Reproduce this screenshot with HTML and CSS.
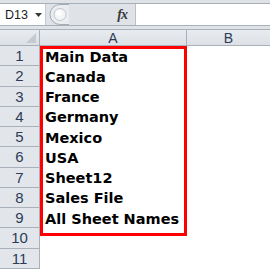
FILE: index.html
```html
<!DOCTYPE html>
<html>
<head>
<meta charset="utf-8">
<link rel="stylesheet" href="styles.css">
</head>
<body>
<div class="app">
  <div class="fbar">
    <div class="fbar-row">
      <div class="namebox">
        <span class="nb-text">D13</span>
        <svg class="nb-arrow" width="7" height="4" viewBox="0 0 7 4"><path d="M0 0H7L3.5 4Z" fill="#3a3a3a"/></svg>
      </div>
      <div class="fx-area">
        <svg class="pill" width="20" height="21" viewBox="0 0 20 21">
          <path d="M20 0.5H11A10 10 0 0 0 11 20.5H20" fill="#e9ecf0" stroke="#a3abb4"/>
          <circle cx="11" cy="10.5" r="6" fill="#f4f5f7" stroke="#c3c8ce"/>
          <circle cx="10" cy="9" r="3" fill="#ffffff" opacity="0.8"/>
        </svg>
        <span class="fx">fx</span>
      </div>
      <div class="finput"></div>
    </div>
  </div>
  <div class="sheet">
    <div class="hrow">
      <div class="corner"><svg width="10" height="10" viewBox="0 0 10 10"><path d="M10 0V10H0Z" fill="#c5cad1"/></svg></div>
      <div class="ch ca">A</div>
      <div class="ch cb">B</div>
    </div>
    <div class="row"><div class="rh">1</div><div class="cell ca">Main Data</div><div class="cell cb"></div></div>
    <div class="row"><div class="rh">2</div><div class="cell ca">Canada</div><div class="cell cb"></div></div>
    <div class="row"><div class="rh">3</div><div class="cell ca">France</div><div class="cell cb"></div></div>
    <div class="row"><div class="rh">4</div><div class="cell ca">Germany</div><div class="cell cb"></div></div>
    <div class="row"><div class="rh">5</div><div class="cell ca">Mexico</div><div class="cell cb"></div></div>
    <div class="row"><div class="rh">6</div><div class="cell ca">USA</div><div class="cell cb"></div></div>
    <div class="row"><div class="rh">7</div><div class="cell ca">Sheet12</div><div class="cell cb"></div></div>
    <div class="row"><div class="rh">8</div><div class="cell ca">Sales File</div><div class="cell cb"></div></div>
    <div class="row"><div class="rh">9</div><div class="cell ca">All Sheet Names</div><div class="cell cb"></div></div>
    <div class="row"><div class="rh">10</div><div class="cell ca"></div><div class="cell cb"></div></div>
    <div class="row"><div class="rh">11</div><div class="cell ca"></div><div class="cell cb"></div></div>
    <div class="hl-box"></div>
  </div>
</div>
</body>
</html>
```

FILE: styles.css
```css
html, body {
  margin: 0;
  padding: 0;
  background: #ffffff;
}
.app {
  width: 270px;
  height: 269px;
  overflow: hidden;
  display: flex;
  flex-direction: column;
}
.fbar {
  background: #dfe3e8;
  padding: 3px 0 3px 0;
  border-top: 0;
}
.fbar-row {
  display: flex;
  height: 21px;
  border-top: 1px solid #a7afb8;
  border-bottom: 1px solid #a7afb8;
}
.namebox {
  width: 46px;
  background: #ffffff;
  display: flex;
  align-items: center;
  justify-content: space-between;
  padding: 0 3px 0 5px;
  box-sizing: border-box;
  border-right: 1px solid #c6ccd3;
}
.nb-text {
  font-family: "Liberation Sans", Arial, sans-serif;
  font-size: 12.5px;
  color: #1e1e1e;
}
.nb-arrow {
  display: block;
}
.fx-area {
  width: 89px;
  display: flex;
  align-items: center;
  background: #dfe3e8;
  padding-left: 3px;
  box-sizing: border-box;
}
.pill {
  display: block;
  margin-top: -1px;
}
.fx {
  margin-left: auto;
  margin-right: 8px;
  font-family: "Liberation Serif", "Times New Roman", serif;
  font-style: italic;
  font-weight: bold;
  font-size: 14px;
  color: #3a3a3a;
  letter-spacing: -1px;
}
.finput {
  flex: 1;
  background: #ffffff;
  border-left: 1px solid #b9c0c8;
}
.sheet {
  position: relative;
  display: flex;
  flex-direction: column;
}
.hrow {
  display: flex;
  height: 17px;
  box-sizing: border-box;
  border-top: 1px solid #a9b0b9;
  border-bottom: 1px solid #a9b0b9;
  background: linear-gradient(#e8ebef, #dde1e6);
}
.corner {
  width: 40px;
  box-sizing: border-box;
  border-right: 1px solid #a9b0b9;
  display: flex;
  align-items: flex-end;
  justify-content: flex-end;
  padding: 0 3px 2px 0;
}
.corner svg {
  display: block;
}
.ch {
  display: flex;
  align-items: center;
  justify-content: center;
  font-family: "Liberation Sans", Arial, sans-serif;
  font-size: 14px;
  color: #2b3c56;
  box-sizing: border-box;
}
.ca {
  width: 147px;
  border-right: 1px solid #a9b0b9;
}
.cb {
  flex: 1;
}
.row {
  display: flex;
  height: 20.25px;
}
.rh {
  width: 40px;
  box-sizing: border-box;
  border-right: 1px solid #a9b0b9;
  border-bottom: 1px solid #a9b0b9;
  background: #e2e6eb;
  display: flex;
  align-items: center;
  justify-content: center;
  font-family: "Liberation Sans", Arial, sans-serif;
  font-size: 15px;
  color: #2b3c56;
}
.cell {
  display: flex;
  align-items: center;
  box-sizing: border-box;
  font-family: "DejaVu Sans", Verdana, sans-serif;
  font-weight: bold;
  font-size: 14.5px;
  color: #000000;
}
.cell.ca {
  border-right: 0;
  padding-left: 5px;
  padding-top: 1px;
}
.hl-box {
  position: absolute;
  left: 40px;
  top: 17px;
  width: 147px;
  height: 190px;
  box-sizing: border-box;
  border: 3px solid #ff0000;
}
```
